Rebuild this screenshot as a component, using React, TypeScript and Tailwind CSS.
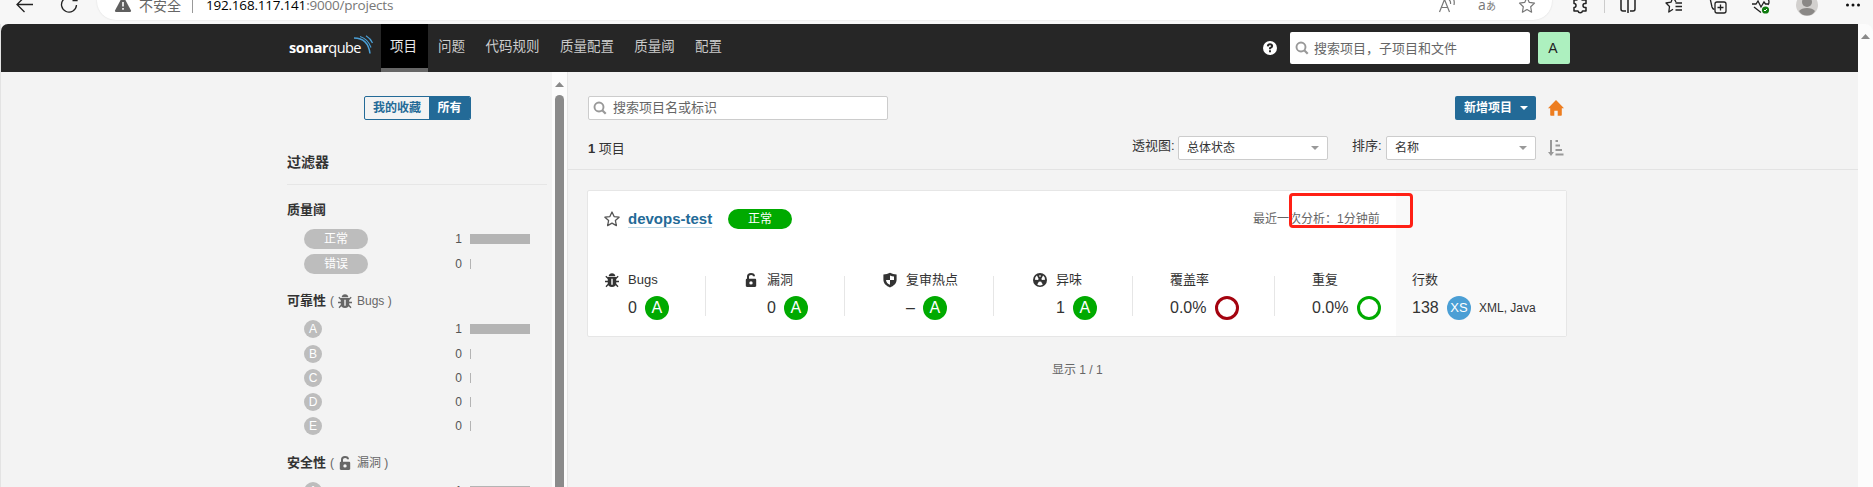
import React from "react";

const CJK = "font-['Liberation_Sans','Noto_Sans_CJK_SC',sans-serif]";

function BugIcon({ className = "" }: { className?: string }) {
  return (
    <svg viewBox="0 0 16 16" className={`size-4 shrink-0 ${className}`} fill="currentColor">
      <path d="M4.600 4.200C4.800 2.400 6.300 1.200 8 1.200s3.200 1.200 3.400 3z" />
      <path fillRule="evenodd" d="M3.800 5h8.400v6.500c0 2-1.700 3.500-4.200 3.500s-4.200-1.500-4.200-3.500zM7.300 6.800v6h1.400v-6z" />
      <path d="M4.500 6.800L1.800 4.200M11.500 6.800l2.700-2.600M4 9.500H1M12 9.500h3M4.500 12L2 14.800M11.500 12l2.500 2.800" stroke="currentColor" strokeWidth="1.300" fill="none" />
    </svg>
  );
}

function LockIcon({ className = "" }: { className?: string }) {
  return (
    <svg viewBox="0 0 16 16" className={`size-4 shrink-0 ${className}`} fill="currentColor">
      <path d="M5 7.500V4.500c0-1.700 1.300-2.600 3-2.600s3 .9 3 2.400" stroke="currentColor" strokeWidth="2" fill="none" />
      <path fillRule="evenodd" d="M4 6.800h8c.7 0 1.200.5 1.200 1.200v5.800c0 .7-.5 1.200-1.200 1.200H4c-.7 0-1.200-.5-1.200-1.200V8c0-.7.5-1.200 1.200-1.200zM8 9.200a1.700 1.700 0 1 0 0 3.400 1.700 1.700 0 0 0 0-3.400z" />
    </svg>
  );
}

function ShieldIcon() {
  return (
    <svg viewBox="0 0 16 16" className="size-4 shrink-0">
      <path fill="#333" d="M8 .8q3 1.600 6.600 1.800v5.100c0 3.700-2.900 6.300-6.600 7.700-3.700-1.400-6.600-4-6.600-7.700V2.600Q5 2.400 8 .8z" />
      <path fill="#fff" d="M8 3.400q2 .9 4 1.100V8H8zM8 8v4.800C5.700 11.800 4.200 10.300 4 8z" />
    </svg>
  );
}

function SmellIcon() {
  return (
    <svg viewBox="0 0 16 16" className="size-4 shrink-0">
      <circle cx="8" cy="8" r="7" fill="#333" />
      <g fill="#fff">
        <path d="M6.600 6.700L4.900 3.600A5.200 5.200 0 0 0 2.900 7.800l3.400.3z" />
        <path d="M9.400 6.700l1.700-3.100a5.200 5.200 0 0 1 2 4.200l-3.400.3z" />
        <path d="M7 9.600l-1.800 2.900a5.200 5.200 0 0 0 5.600 0L9 9.600z" />
        <path d="M7.300 3.200h1.400v1.600H7.300z" />
      </g>
      <circle cx="8" cy="8" r="1.400" fill="#333" />
    </svg>
  );
}

function SearchIcon() {
  return (
    <svg viewBox="0 0 14 14" className="size-[14px] shrink-0" fill="none" stroke="#999" strokeWidth="1.900">
      <circle cx="6" cy="6" r="4.500" />
      <path d="M9.200 9.200l3.500 3.500" strokeWidth="2.200" />
    </svg>
  );
}

function Slot({ w, children }: { w: string; children: React.ReactNode }) {
  return <div className={`flex shrink-0 items-center justify-center ${w}`}>{children}</div>;
}

function BrowserBar() {
  const line = { fill: "none", stroke: "#222", strokeWidth: 1.3 };
  return (
    <div className="h-6 shrink-0 overflow-hidden bg-[#f7f7f7]">
      <div className="-mt-[11px] flex h-8 items-center">
        <Slot w="w-[50px]">
          <svg width="20" height="20" viewBox="0 0 20 20" {...line}>
            <path d="M18 9.500H2M9.500 2L2 9.500 9.500 17" />
          </svg>
        </Slot>
        <Slot w="w-[38px]">
          <svg width="20" height="20" viewBox="0 0 20 20" {...line}>
            <path d="M4.500 4.500a7.500 7.500 0 1 0 13 5.500M13.500 5.500H18V1" />
          </svg>
        </Slot>
        <div className="ml-[9px] flex h-[38px] w-[1455px] shrink-0 -translate-y-[4px] items-center rounded-[19px] bg-white pt-2 shadow-[0_0_2px_rgba(0,0,0,0.12)]">
          <svg width="18" height="16" viewBox="0 0 18 16" className="ml-[17px] shrink-0">
            <path d="M7.800.8h2.400L17 13.500q.3 1.500-1.200 1.500H2.200Q.7 15 1 13.500z" fill="#5f5f5f" />
            <path d="M9 5v4.500M9 11v1.700" stroke="#fff" strokeWidth="1.600" />
          </svg>
          <span className="ml-[7px] w-[43px] text-[14px] leading-5 whitespace-nowrap text-[#666] font-['Noto_Sans_CJK_SC',sans-serif]">不安全</span>
          <span className="ml-[10px] h-4 w-px bg-[#999]" />
          <span className="ml-[13px] text-[13.500px] leading-5 tracking-[-0.210px] whitespace-nowrap text-[#777] font-['Open_Sans',sans-serif]">
            <span className="text-black">192.168.117.141</span>:9000/projects
          </span>
          <div className="ml-auto flex items-center pr-[5px] text-[#777]">
            <Slot w="w-10">
              <svg width="18" height="18" viewBox="0 0 18 18" fill="none" stroke="#777" strokeWidth="1.200">
                <path d="M1.500 16L6.500 3.500 11.500 16M3.300 11.500h6.400M11 3.500q2 2 1.500 4.500M14 1q3 3 2 8" />
              </svg>
            </Slot>
            <Slot w="w-10">
              <span className="text-[14px] leading-5 whitespace-nowrap font-['Open_Sans','Noto_Sans_CJK_JP',sans-serif]">a<span className="text-[10px]">あ</span></span>
            </Slot>
            <Slot w="w-10">
              <svg width="18" height="18" viewBox="0 0 18 18" fill="none" stroke="#777" strokeWidth="1.200" strokeLinejoin="round">
                <path d="M9 1.500l2.300 4.900 5.200.7-3.800 3.700.9 5.400L9 13.600l-4.600 2.600.9-5.400L1.500 7.100l5.200-.7z" />
              </svg>
            </Slot>
          </div>
        </div>
        <div className="ml-2 flex items-center">
          <Slot w="w-10">
            <svg width="18" height="18" viewBox="0 0 18 18" {...line} strokeWidth={1.5} strokeLinejoin="round">
              <path d="M3 4h3a2.500 2.500 0 0 1 5 0h4v3.500h-1a2 2 0 0 0 0 4h1V15h-3.500a2.300 2.300 0 0 1-4.500 0H3v-3.500a2 2 0 0 0 0-4z" />
            </svg>
          </Slot>
          <span className="ml-1 h-4 w-px bg-[#ccc]" />
          <Slot w="w-[46px]">
            <svg width="18" height="18" viewBox="0 0 18 18" {...line} strokeWidth={1.5}>
              <path d="M7 15H4q-2 0-2-2V3h5M11 15h3q2 0 2-2V3h-5M9 1v16" />
            </svg>
          </Slot>
          <Slot w="w-[45px]">
            <svg width="18" height="18" viewBox="0 0 18 18" {...line} strokeLinejoin="round">
              <path d="M11 6L8 1 6 6.200 1 7l3.500 3.500L3.800 16 8 13.200M10.500 7H17M10.500 10.500H17M10.500 14H17" />
            </svg>
          </Slot>
          <Slot w="w-[43px]">
            <svg width="18" height="20" viewBox="0 0 18 20" {...line}>
              <path d="M1 3l2 9q.5 2 2.500 2.500" />
              <rect x="6" y="7" width="11" height="11" rx="2" />
              <path d="M11.500 9.500v6M8.500 12.500h6" />
            </svg>
          </Slot>
          <Slot w="w-[44px]">
            <svg width="20" height="20" viewBox="0 0 20 20" {...line}>
              <path d="M3 4q3-4 7 0 4-4 7 0 2 3 0 6M1 9h4l2-3 3 6 3-5 1.500 2H18M3 12l7 5.500" />
              <circle cx="14.500" cy="15" r="3.600" fill="#107c10" stroke="none" />
              <path d="M13 15l1 1 2-2" stroke="#fff" strokeWidth="1" />
            </svg>
          </Slot>
          <Slot w="w-[48px]">
            <svg width="22" height="22" viewBox="0 0 22 22">
              <circle cx="11" cy="11" r="11" fill="#d2d0ce" />
              <circle cx="11" cy="8" r="5" fill="#8a8886" />
              <path d="M3 17q2.500-3 8-3t8 3q-2.500 4.500-8 4.500T3 17z" fill="#8a8886" />
            </svg>
          </Slot>
          <Slot w="w-[44px]">
            <svg width="16" height="4" viewBox="0 0 16 4" fill="#111">
              <circle cx="2.500" cy="2" r="1.500" />
              <circle cx="8" cy="2" r="1.500" />
              <circle cx="13.500" cy="2" r="1.500" />
            </svg>
          </Slot>
        </div>
      </div>
    </div>
  );
}

function Header() {
  const items: [string, string][] = [
    ["问题", "w-[47px]"],
    ["代码规则", "w-[75px]"],
    ["质量配置", "w-[74px]"],
    ["质量阈", "w-[61px]"],
    ["配置", "w-[47px]"],
  ];
  return (
    <header className="flex h-12 shrink-0 items-center rounded-tl-[7px] bg-[#262626]">
      <div className="ml-[288px] flex w-[92px] shrink-0 items-center">
        <span className="w-[72px] text-[14.500px] leading-5 tracking-[-0.550px] whitespace-nowrap text-white font-['Open_Sans',sans-serif]">
          <b className="tracking-[-0.350px]">sonar</b>qube
        </span>
        <svg width="20" height="20" viewBox="0 0 20 20" className="-ml-[7px] -mt-[7px] shrink-0" fill="none" stroke="#4b9fd5" strokeWidth="1.200">
          <path d="M0 3Q14 3 16 18.500" strokeWidth="1.500" />
          <path d="M6 1.500Q14 4 17 12.500M12 .8Q16.500 3.500 18.500 8" />
        </svg>
      </div>
      <nav className="flex h-12 text-[13.500px] leading-[42px] text-[#ccc] font-['Noto_Sans_CJK_SC',sans-serif]">
        <span className="h-12 w-[47px] border-b-4 border-[#666] bg-black pr-[2px] text-center whitespace-nowrap text-[#e8e8e8]">项目</span>
        {items.map(([t, w]) => (
          <span key={t} className={`text-center whitespace-nowrap ${w}`}>{t}</span>
        ))}
      </nav>
      <div className="mr-[288px] ml-auto flex items-center">
        <svg width="14" height="14" viewBox="0 0 14 14">
          <circle cx="7" cy="7" r="7" fill="#fff" />
          <path d="M4.800 5.300Q5 3.300 7 3.300t2.200 1.800Q9.200 6.300 7 7.200V8.300M7 9.300v1.900" stroke="#262626" strokeWidth="1.900" fill="none" />
        </svg>
        <div className="ml-[13px] flex h-8 w-60 items-center rounded-[2px] bg-white pl-[5px]">
          <SearchIcon />
          <span className="ml-[5px] text-[13px] leading-5 whitespace-nowrap text-[#666] font-['Noto_Sans_CJK_SC',sans-serif]">搜索项目，子项目和文件</span>
        </div>
        <div className="ml-2 flex size-8 items-center justify-center rounded-[2px] bg-[#adf0bf] pr-[2px] text-[14px] text-[#222]">A</div>
      </div>
    </header>
  );
}

function FacetRow({ children, count }: { children: React.ReactNode; count: number }) {
  return (
    <div className="flex h-6 items-center pl-[17px]">
      <div className="flex-1">{children}</div>
      <span className="text-[12px] text-[#555]">{count}</span>
      <div className="mr-[17px] ml-2 w-[60px]">
        <div className={count ? "h-[10px] w-[60px] bg-[#b4b4b4]" : "h-[10px] w-px bg-[#b4b4b4]"} />
      </div>
    </div>
  );
}

function Grade({ letter }: { letter: string }) {
  return <div className="flex size-[18px] items-center justify-center rounded-full bg-[#bdbdbd] text-[12px] leading-none text-white">{letter}</div>;
}

function UpArrow() {
  return (
    <svg width="9" height="5" viewBox="0 0 9 5" className="shrink-0">
      <path d="M4.500 0L9 5H0z" fill="#8a8a8a" />
    </svg>
  );
}

function Sidebar() {
  const ratings = ["B", "C", "D", "E"];
  return (
    <aside className="flex h-[415px] w-[567px] shrink-0 overflow-hidden border-r border-[#e6e6e6]">
      <div className="ml-[286px] w-[260px] shrink-0">
        <div className="mt-6 ml-[77px] flex h-6 w-[107px] overflow-hidden rounded-[2px] border border-[#236a97] text-center text-[12px] leading-[22px] font-bold whitespace-nowrap text-[#236a97]">
          <span className="w-16">我的收藏</span>
          <span className="flex-1 bg-[#236a97] text-white">所有</span>
        </div>
        <div className="mt-8 flex h-5 items-center text-[14px] font-bold">过滤器</div>
        <div className="mt-[12px] h-px bg-[#e6e6e6]" />
        <div className="mt-[15px] flex h-5 items-center text-[13px] font-bold">质量阈</div>
        <div className="mt-[7px]">
          <FacetRow count={1}>
            <div className="h-5 w-16 rounded-full bg-[#bdbdbd] text-center text-[12px] leading-5 text-white">正常</div>
          </FacetRow>
          <div className="h-px" />
          <FacetRow count={0}>
            <div className="h-5 w-16 rounded-full bg-[#bdbdbd] text-center text-[12px] leading-5 text-white">错误</div>
          </FacetRow>
        </div>
        <div className="mt-[15px] flex h-5 items-center text-[12px] whitespace-nowrap text-[#666]">
          <b className="text-[13px] text-[#333]">可靠性</b>
          <span className="ml-1">(</span>
          <BugIcon className="mr-1 ml-[3px]" />
          <span>Bugs )</span>
        </div>
        <div className="mt-[6px]">
          <FacetRow count={1}><Grade letter="A" /></FacetRow>
          <div className="h-px" />
          {ratings.map((r) => (
            <FacetRow key={r} count={0}><Grade letter={r} /></FacetRow>
          ))}
        </div>
        <div className="mt-[15px] flex h-5 items-center text-[12px] whitespace-nowrap text-[#666]">
          <b className="text-[13px] text-[#333]">安全性</b>
          <span className="ml-1">(</span>
          <LockIcon className="mr-1 ml-[3px]" />
          <span>漏洞 )</span>
        </div>
        <div className="mt-[6px]">
          <FacetRow count={1}><Grade letter="A" /></FacetRow>
        </div>
      </div>
      <div className="ml-[5px] flex w-[15px] shrink-0 flex-col items-center bg-[#fcfcfc] pt-[10px]">
        <UpArrow />
        <div className="mt-2 h-[420px] w-[9px] shrink-0 rounded-full bg-[#8b8b8b]" />
      </div>
    </aside>
  );
}

function Caret({ color }: { color: string }) {
  return (
    <svg width="8" height="4" viewBox="0 0 8 4" className="shrink-0">
      <path d="M0 0h8L4 4z" fill={color} />
    </svg>
  );
}

function Select({ value }: { value: string }) {
  return (
    <div className="flex h-6 w-[150px] shrink-0 items-center justify-between rounded-[2px] border border-[#ccc] bg-white pr-2 pl-2 text-[12px]">
      {value}
      <Caret color="#999" />
    </div>
  );
}

function Measure({ width, icon, label, children, last }: { width: string; icon?: React.ReactNode; label: string; children: React.ReactNode; last?: boolean }) {
  return (
    <div className={`flex h-[57px] shrink-0 ${width}`}>
      <div className="flex w-6 shrink-0 pt-[3px]">{icon}</div>
      <div className="flex-1">
        <div className="h-[23px] text-[13px] leading-[21px] whitespace-nowrap">{label}</div>
        <div className="mt-[4px] flex h-6 items-center text-[16px] whitespace-nowrap">{children}</div>
      </div>
      {!last && <div className="mt-[7px] h-10 w-px bg-[#e6e6e6]" />}
    </div>
  );
}

function Rating() {
  return <span className="ml-2 flex size-6 shrink-0 items-center justify-center rounded-full bg-[#0a0] text-[16px] leading-none text-white">A</span>;
}

function ProjectCard() {
  return (
    <div className="relative ml-[19px] flex h-[147px] w-[980px] shrink-0 rounded-[2px] border border-[#e6e6e6] bg-white">
      <div className="w-[808px] shrink-0">
        <div className="mt-[18px] flex h-5 items-center pl-4">
          <svg width="16" height="16" viewBox="0 0 16 16" fill="none" stroke="#555" strokeWidth="1.300" strokeLinejoin="round">
            <path d="M8 1l2.100 4.600 5 .6-3.700 3.400 1 5L8 12.100l-4.400 2.500 1-5L.9 6.200l5-.6z" />
          </svg>
          <span className="ml-2 h-[18px] w-[84px] border-b border-[#b9d6e5] text-[15px] leading-[17px] font-bold whitespace-nowrap text-[#236a97]">devops-test</span>
          <span className="ml-4 h-5 w-16 rounded-full bg-[#0a0] text-center text-[12px] leading-5 text-white">正常</span>
          <span className="mr-4 ml-auto w-[127px] text-[12px] whitespace-nowrap text-[#666]">最近一次分析：1分钟前</span>
        </div>
        <div className="mt-10 flex pl-4">
          <Measure width="w-[102px]" icon={<BugIcon />} label="Bugs">0<Rating /></Measure>
          <div className="w-[37px] shrink-0" />
          <Measure width="w-[102px]" icon={<LockIcon />} label="漏洞">0<Rating /></Measure>
          <div className="w-[37px] shrink-0" />
          <Measure width="w-[112px]" icon={<ShieldIcon />} label="复审热点">–<Rating /></Measure>
          <div className="w-[38px] shrink-0" />
          <Measure width="w-[101px]" icon={<SmellIcon />} label="异味">1<Rating /></Measure>
          <div className="w-[13px] shrink-0" />
          <Measure width="w-[129px]" label="覆盖率">
            <span className="w-[45px]">0.0%</span>
            <span className="size-6 rounded-full border-[3px] border-[#a4030f]" />
          </Measure>
          <div className="w-[13px] shrink-0" />
          <Measure width="w-[100px]" label="重复" last>
            <span className="w-[45px]">0.0%</span>
            <span className="size-6 rounded-full border-[3px] border-[#0a0]" />
          </Measure>
        </div>
      </div>
      <div className="flex-1 bg-[#f9f9f9] pt-[78px]">
        <div className="pl-4">
          <div className="h-[23px] text-[13px] leading-[21px]">行数</div>
          <div className="mt-[4px] flex h-6 items-center text-[16px] whitespace-nowrap">
            <span className="w-[35px]">138</span>
            <span className="flex size-6 items-center justify-center rounded-full bg-[#4b9fd5] text-[13px] text-white">XS</span>
            <span className="ml-2 text-[12px]">XML, Java</span>
          </div>
        </div>
      </div>
      <div className="absolute top-[2px] left-[701px] h-[35px] w-[124px] rounded-[4px] border-3 border-[#ff2015]" />
    </div>
  );
}

function Main() {
  return (
    <main className="flex h-[415px] flex-1 flex-col">
      <div className="mt-6 flex h-6 shrink-0 items-center pl-5">
        <div className="flex h-6 w-[300px] items-center rounded-[2px] border border-[#ccc] bg-white pl-[4px]">
          <SearchIcon />
          <span className="ml-[6px] text-[13px] leading-5 text-[#666]">搜索项目名或标识</span>
        </div>
        <div className="ml-[567px] flex h-6 w-[81px] items-center rounded-[2px] bg-[#236a97] pl-[9px] text-[12px] font-bold whitespace-nowrap text-white">
          <span className="mr-2">新增项目</span>
          <Caret color="#fff" />
        </div>
        <svg width="16" height="16" viewBox="0 0 16 16" className="ml-3" fill="#ed7d20">
          <path d="M8 0l8 8.200h-2.200V15q0 .8-.8.8H9.700v-5H6.300v5H3q-.8 0-.8-.8V8.200H0z" />
        </svg>
      </div>
      <div className="mt-4 flex h-6 shrink-0 items-center pl-5 text-[13px] whitespace-nowrap">
        <span className="w-[544px] pt-[1px]"><b>1</b> 项目</span>
        <span className="mr-[3px] w-[43px] pb-1">透视图:</span>
        <Select value="总体状态" />
        <span className="mr-[4px] ml-6 w-[30px] pb-1">排序:</span>
        <Select value="名称" />
        <svg width="16" height="16" viewBox="0 0 16 16" className="ml-3" fill="none" stroke="#999" strokeWidth="2">
          <path d="M3 0v14M7.500 1h2.500M7.500 5.500h4.500M7.500 10h6.500M7.500 14.500h8" />
          <path d="M0 12h6l-3 4z" fill="#999" stroke="none" />
        </svg>
      </div>
      <div className="mt-[9px] mb-5 h-px shrink-0 bg-[#e3e3e3]" />
      <ProjectCard />
      <div className="mt-[23px] pl-[484px] text-[12px] leading-5 text-[#666]">显示 1 / 1</div>
    </main>
  );
}

export default function App() {
  return (
    <div className={`flex h-[487px] w-[1873px] flex-col overflow-hidden bg-[#f7f7f7] text-[#333] ${CJK}`}>
      <BrowserBar />
      <div className="flex h-[463px]">
        <div className="w-px bg-[#e3e3e3]" />
        <div className="w-[1857px] shrink-0">
          <Header />
          <div className="flex h-[415px] bg-[#f3f3f3]">
            <Sidebar />
            <Main />
          </div>
        </div>
        <div className="flex w-[15px] shrink-0 justify-center rounded-tr-[8px] bg-[#fcfcfc] pt-[10px]">
          <UpArrow />
        </div>
      </div>
    </div>
  );
}
